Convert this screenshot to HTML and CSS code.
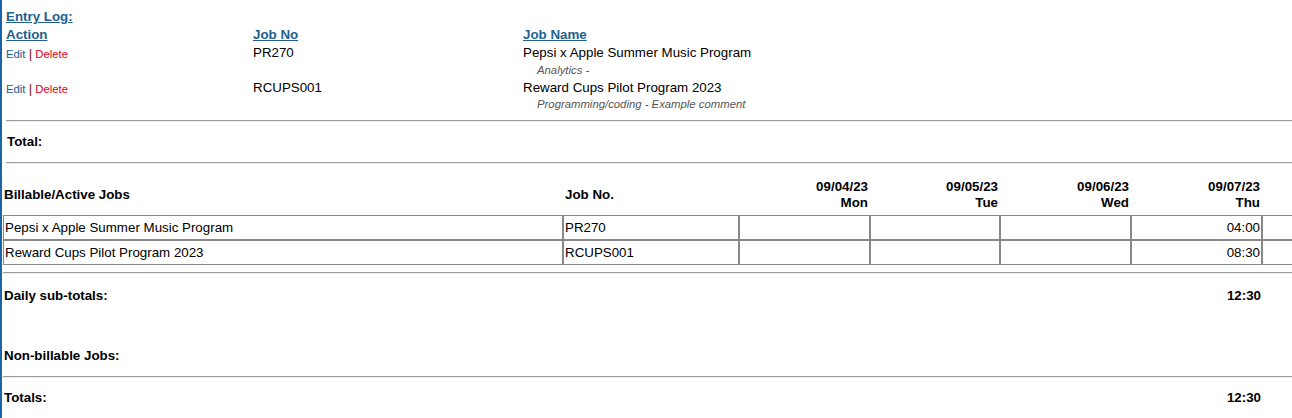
FILE: index.html
```html
<!DOCTYPE html>
<html>
<head>
<meta charset="utf-8">
<title>Timesheet</title>
<link rel="stylesheet" href="styles.css">
</head>
<body>
<div class="page">
  <section class="entry">
    <div class="entry-title"><a href="#">Entry Log:</a></div>
    <div class="entry-grid">
      <div class="eh"><a href="#">Action</a></div>
      <div class="eh"><a href="#">Job No</a></div>
      <div class="eh"><a href="#">Job Name</a></div>

      <div class="ec actions"><a class="edit" href="#">Edit</a> <span class="pipe">|</span> <a class="del" href="#">Delete</a></div>
      <div class="ec">PR270</div>
      <div class="ec">Pepsi x Apple Summer Music Program</div>
      <div class="comment">Analytics -</div>

      <div class="ec actions"><a class="edit" href="#">Edit</a> <span class="pipe">|</span> <a class="del" href="#">Delete</a></div>
      <div class="ec">RCUPS001</div>
      <div class="ec">Reward Cups Pilot Program 2023</div>
      <div class="comment c2">Programming/coding - Example comment</div>
    </div>
    <div class="rule first"></div>
    <div class="total-line">Total:</div>
    <div class="rule"></div>
  </section>

  <table class="jobs">
    <thead>
      <tr>
        <th class="c1 left">Billable/Active Jobs</th>
        <th class="c2 left">Job No.</th>
        <th class="c3">09/04/23<br>Mon</th>
        <th class="c4">09/05/23<br>Tue</th>
        <th class="c5">09/06/23<br>Wed</th>
        <th class="c6">09/07/23<br>Thu</th>
        <th class="c7"></th>
      </tr>
    </thead>
    <tbody>
      <tr>
        <td>Pepsi x Apple Summer Music Program</td>
        <td>PR270</td>
        <td></td><td></td><td></td>
        <td class="num">04:00</td>
        <td></td>
      </tr>
      <tr>
        <td>Reward Cups Pilot Program 2023</td>
        <td>RCUPS001</td>
        <td></td><td></td><td></td>
        <td class="num">08:30</td>
        <td></td>
      </tr>
    </tbody>
  </table>

  <div class="rule full"></div>
  <div class="sum-row sub"><span>Daily sub-totals:</span><span>12:30</span></div>
  <div class="sum-row nonbill"><span>Non-billable Jobs:</span></div>
  <div class="rule full after-nonbill"></div>
  <div class="sum-row totals"><span>Totals:</span><span>12:30</span></div>
</div>
</body>
</html>
```

FILE: styles.css
```css
html, body {
  margin: 0;
  padding: 0;
  background: #fff;
  overflow: hidden;
}

body {
  font-family: "Liberation Sans", Arial, sans-serif;
  font-size: 13.333px;
  color: #000;
}

.page {
  border-left: 2px solid #1b64a6;
  min-height: 418px;
  box-sizing: border-box;
}

a {
  color: #22618f;
}

.entry {
  padding-left: 4px;
  padding-top: 8px;
}

.entry-title {
  font-weight: bold;
  line-height: 18px;
}

.entry-grid {
  display: grid;
  grid-template-columns: 247px 270px 1fr;
}

.eh {
  font-weight: bold;
  line-height: 18px;
}

.ec {
  line-height: 18px;
  height: 18px;
}

.actions {
  font-size: 11.333px;
  line-height: 20px;
}

.actions a {
  text-decoration: none;
}

.edit {
  color: #1a5b8c;
}

.del {
  color: #e3001b;
}

.pipe {
  color: #7a1020;
  font-size: 13.333px;
  line-height: 1;
}

.comment {
  grid-column: 3;
  font-style: italic;
  font-size: 11.333px;
  color: #555;
  line-height: 17px;
  padding-left: 14px;
}

.comment.c2 {
  line-height: 15px;
}

.rule {
  border-top: 1px solid #9a9a9a;
  border-bottom: 1px solid #ececec;
}

.rule.first {
  margin-top: 8px;
}

.total-line {
  font-weight: bold;
  line-height: 18px;
  padding: 11px 0 11px 1px;
}

.jobs {
  border-collapse: separate;
  border-spacing: 0;
  table-layout: fixed;
  margin-left: 1px;
  width: 1330px;
  margin-top: 0;
}

.jobs th, .jobs td {
  box-sizing: border-box;
  border: 1px solid transparent;
  padding: 0 1px;
}

.jobs th {
  font-weight: bold;
  text-align: right;
  line-height: 16px;
  padding-top: 14px;
  padding-bottom: 3px;
  vertical-align: middle;
}

.jobs th.left {
  text-align: left;
}

.jobs th.c1 { width: 560px; padding-left: 0; }
.jobs th.c2 { width: 176px; }
.jobs th.c3 { width: 131px; }
.jobs th.c4 { width: 130px; }
.jobs th.c5 { width: 131px; }
.jobs th.c6 { width: 131px; }
.jobs th.c7 { width: 71px; }

.jobs td {
  border-color: #888;
  height: 25px;
  line-height: 23px;
  vertical-align: middle;
  white-space: nowrap;
}

.jobs td.num {
  text-align: right;
  padding-right: 1px;
}

.full {
  margin-left: 1px;
  margin-top: 7px;
}

.full.after-nonbill {
  margin-top: 0;
}

.sum-row {
  display: flex;
  justify-content: space-between;
  width: 1259px;
  margin-left: 1px;
  font-weight: bold;
  line-height: 18px;
  padding: 0 1px;
  box-sizing: border-box;
}

.sub {
  padding-top: 13px;
}

.nonbill {
  padding-top: 42px;
  padding-bottom: 11px;
}

.totals {
  padding-top: 11px;
}
```
